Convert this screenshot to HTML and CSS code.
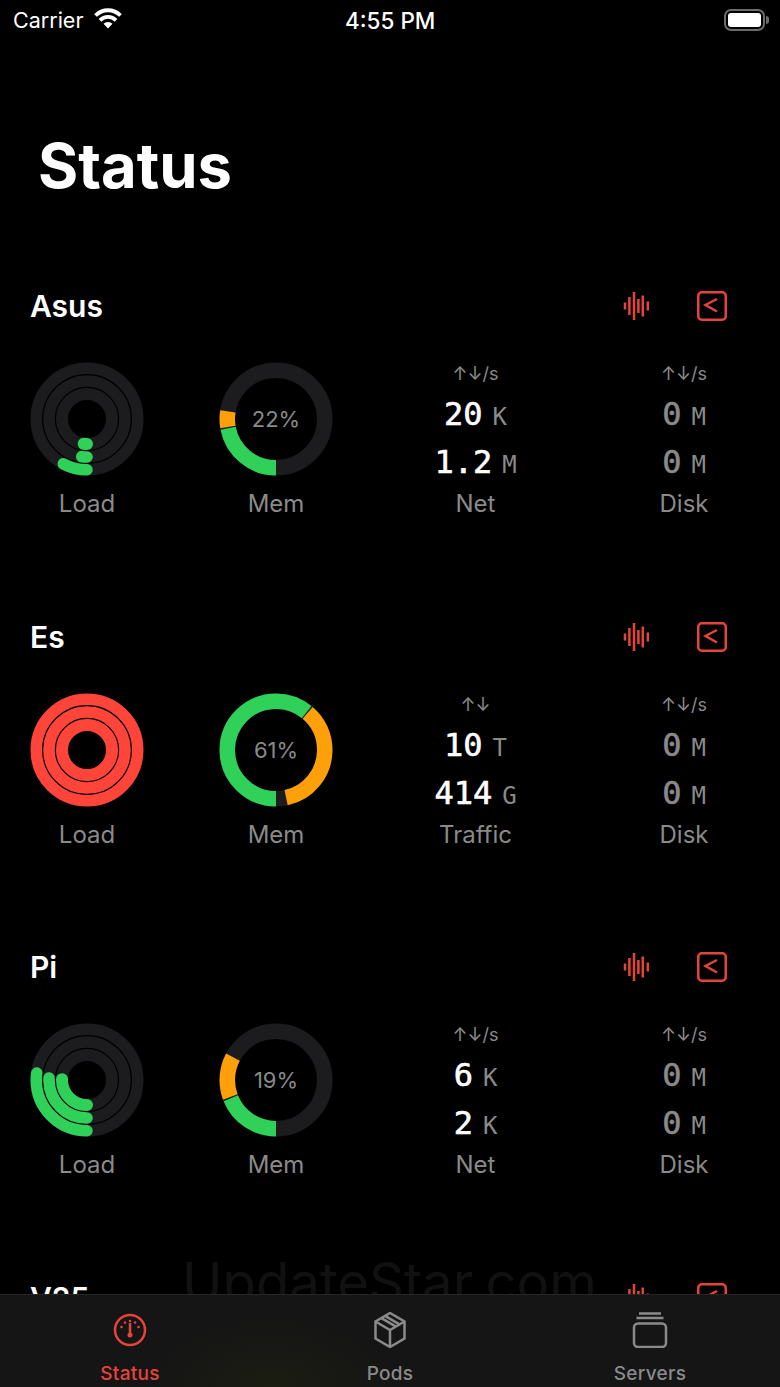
FILE: index.html
```html
<!doctype html>
<html lang="en">
<head>
    <meta charset="UTF-8">
    <meta name="viewport" content="width=device-width, initial-scale=1.0">
    <title>Status</title>
    <link rel="stylesheet" href="styles.css">
</head>
<body>
<svg class="defs" width="0" height="0">
    <symbol id="wave" viewBox="0 0 28 28">
        <path d="M2 10.500v7M6.400 5v18M11 0v28M15.400 7v14M19.800 3.500v21M24.800 9.500v9"/>
    </symbol>
    <symbol id="term" viewBox="0 0 30 30">
        <rect x="1.250" y="1.250" width="27.500" height="27.500" rx="3.500"/>
        <path d="M20 8 8.500 14 20 20.500"/>
    </symbol>
    <symbol id="load-track" viewBox="-57 -57 114 114">
        <circle class="track" r="50.750" stroke-width="11.500"/>
        <circle class="track" r="38" stroke-width="11.600"/>
        <circle class="track" r="25" stroke-width="12"/>
    </symbol>
    <symbol id="mem-track" viewBox="-57 -57 114 114">
        <circle class="track" r="48.750" stroke-width="15.500"/>
    </symbol>
</svg>

<div class="statusbar">
    <div class="carrier">
        <span>Carrier</span>
        <svg class="wifi" width="28" height="21" viewBox="0 0 28 21">
            <path d="M1.500 7.500a17.500 17.500 0 0 1 25 0M6 12.300a11.200 11.200 0 0 1 16 0"/>
            <path class="wifi-tip" d="M14 20.500 9.500 15.800a6.500 6.500 0 0 1 9 0z"/>
        </svg>
    </div>
    <div class="clock">4:55 PM</div>
    <div class="battery"><i></i></div>
</div>

<h1 class="page-title">Status</h1>

<section class="server">
    <div class="server-head">
        <h2>Asus</h2>
        <svg class="icon-wave"><use href="#wave"/></svg>
        <svg class="icon-term"><use href="#term"/></svg>
    </div>
    <div class="metrics">
        <div class="gauge">
            <svg class="ring" viewBox="-57 -57 114 114">
                <use href="#load-track" x="-57" y="-57" width="114" height="114"/>
                <g transform="rotate(90)" class="cap">
                    <circle class="green" r="50.750" stroke-width="11.500" pathLength="360" stroke-dasharray="28 332"/>
                    <circle class="green" r="38" stroke-width="11.600" pathLength="360" stroke-dasharray="8 352"/>
                    <circle class="green" r="25" stroke-width="12" pathLength="360" stroke-dasharray="8 352"/>
                </g>
            </svg>
            <div class="label">Load</div>
        </div>
        <div class="gauge">
            <div class="ring-wrap">
                <svg class="ring" viewBox="-57 -57 114 114">
                    <use href="#mem-track" x="-57" y="-57" width="114" height="114"/>
                    <g transform="rotate(90)">
                        <circle class="green" r="48.750" stroke-width="15.500" pathLength="360" stroke-dasharray="79 281"/>
                        <circle class="orange" r="48.750" stroke-width="15.500" pathLength="360" stroke-dasharray="0 80.500 18.500 261"/>
                    </g>
                </svg>
                <span class="pct">22%</span>
            </div>
            <div class="label">Mem</div>
        </div>
        <div class="stat">
            <div class="stat-head">↑↓/s</div>
            <div class="value"><b>20</b><span>K</span></div>
            <div class="value"><b>1.2</b><span>M</span></div>
            <div class="label">Net</div>
        </div>
        <div class="stat idle">
            <div class="stat-head">↑↓/s</div>
            <div class="value"><b>0</b><span>M</span></div>
            <div class="value"><b>0</b><span>M</span></div>
            <div class="label">Disk</div>
        </div>
    </div>
</section>

<section class="server">
    <div class="server-head">
        <h2>Es</h2>
        <svg class="icon-wave"><use href="#wave"/></svg>
        <svg class="icon-term"><use href="#term"/></svg>
    </div>
    <div class="metrics">
        <div class="gauge">
            <svg class="ring" viewBox="-57 -57 114 114">
                <circle class="red" r="50.750" stroke-width="11.500"/>
                <circle class="red" r="38" stroke-width="11.600"/>
                <circle class="red" r="25" stroke-width="12"/>
            </svg>
            <div class="label">Load</div>
        </div>
        <div class="gauge">
            <div class="ring-wrap">
                <svg class="ring" viewBox="-57 -57 114 114">
                    <use href="#mem-track" x="-57" y="-57" width="114" height="114"/>
                    <g transform="rotate(90)">
                        <circle class="green" r="48.750" stroke-width="15.500" pathLength="360" stroke-dasharray="219 141"/>
                        <circle class="orange" r="48.750" stroke-width="15.500" pathLength="360" stroke-dasharray="0 220.500 127.500 12"/>
                    </g>
                </svg>
                <span class="pct">61%</span>
            </div>
            <div class="label">Mem</div>
        </div>
        <div class="stat">
            <div class="stat-head">↑↓</div>
            <div class="value"><b>10</b><span>T</span></div>
            <div class="value"><b>414</b><span>G</span></div>
            <div class="label">Traffic</div>
        </div>
        <div class="stat idle">
            <div class="stat-head">↑↓/s</div>
            <div class="value"><b>0</b><span>M</span></div>
            <div class="value"><b>0</b><span>M</span></div>
            <div class="label">Disk</div>
        </div>
    </div>
</section>

<section class="server">
    <div class="server-head">
        <h2>Pi</h2>
        <svg class="icon-wave"><use href="#wave"/></svg>
        <svg class="icon-term"><use href="#term"/></svg>
    </div>
    <div class="metrics">
        <div class="gauge">
            <svg class="ring" viewBox="-57 -57 114 114">
                <use href="#load-track" x="-57" y="-57" width="114" height="114"/>
                <g transform="rotate(90)" class="cap">
                    <circle class="green" r="50.750" stroke-width="11.500" pathLength="360" stroke-dasharray="98 262"/>
                    <circle class="green" r="38" stroke-width="11.600" pathLength="360" stroke-dasharray="93 267"/>
                    <circle class="green" r="25" stroke-width="12" pathLength="360" stroke-dasharray="92 268"/>
                </g>
            </svg>
            <div class="label">Load</div>
        </div>
        <div class="gauge">
            <div class="ring-wrap">
                <svg class="ring" viewBox="-57 -57 114 114">
                    <use href="#mem-track" x="-57" y="-57" width="114" height="114"/>
                    <g transform="rotate(90)">
                        <circle class="green" r="48.750" stroke-width="15.500" pathLength="360" stroke-dasharray="68 292"/>
                        <circle class="orange" r="48.750" stroke-width="15.500" pathLength="360" stroke-dasharray="0 69.500 48.500 242"/>
                    </g>
                </svg>
                <span class="pct">19%</span>
            </div>
            <div class="label">Mem</div>
        </div>
        <div class="stat">
            <div class="stat-head">↑↓/s</div>
            <div class="value"><b>6</b><span>K</span></div>
            <div class="value"><b>2</b><span>K</span></div>
            <div class="label">Net</div>
        </div>
        <div class="stat idle">
            <div class="stat-head">↑↓/s</div>
            <div class="value"><b>0</b><span>M</span></div>
            <div class="value"><b>0</b><span>M</span></div>
            <div class="label">Disk</div>
        </div>
    </div>
</section>

<section class="server">
    <div class="server-head">
        <h2>V25</h2>
        <svg class="icon-wave"><use href="#wave"/></svg>
        <svg class="icon-term"><use href="#term"/></svg>
    </div>
</section>

<div class="watermark">UpdateStar.com</div>

<nav class="tabbar">
    <a class="tab active">
        <svg class="tab-icon" viewBox="0 0 36 36">
            <circle cx="18" cy="18" r="15"/>
            <path d="M18 11v11"/>
            <circle class="solid" cx="18" cy="23" r="2.500"/>
            <circle class="solid" cx="9.500" cy="15" r="1.300"/>
            <circle class="solid" cx="13" cy="10.500" r="1.300"/>
            <circle class="solid" cx="18" cy="9" r="1.300"/>
            <circle class="solid" cx="23" cy="10.500" r="1.300"/>
            <circle class="solid" cx="26.500" cy="15" r="1.300"/>
        </svg>
        <span>Status</span>
    </a>
    <a class="tab">
        <svg class="tab-icon" viewBox="0 0 36 36">
            <path d="M18 1 32.500 9.500v17L18 35 3.500 26.500v-17z"/>
            <path d="M3.500 9.500 18 18 32.500 9.500M18 18v17M9 5.800l14.500 8.500M13 3.800l14.500 8.500"/>
        </svg>
        <span>Pods</span>
    </a>
    <a class="tab">
        <svg class="tab-icon" viewBox="0 0 36 36">
            <rect x="2" y="11.500" width="32" height="23.500" rx="4"/>
            <path d="M7 1.500h22M4.500 6h27"/>
        </svg>
        <span>Servers</span>
    </a>
</nav>
</body>
</html>
```

FILE: styles.css
```css
* {
    box-sizing: border-box;
}
html, body {
    margin: 0;
    height: 1387px;
    overflow: hidden;
}
body {
    position: relative;
    background: #000;
    color: #fff;
    font-family: Inter, "Noto Sans", sans-serif;
}
.defs {
    position: absolute;
}
h1, h2 {
    margin: 0;
}

/* status bar */
.statusbar {
    display: flex;
    align-items: center;
    height: 40px;
    padding: 0 15px 0 13px;
}
.carrier {
    display: flex;
    align-items: center;
    gap: 11px;
    width: 332px;
    font-size: 21.500px;
}
.wifi {
    margin-top: -3px;
}
.wifi path {
    fill: none;
    stroke: #fff;
    stroke-width: 3.800;
}
.wifi .wifi-tip {
    fill: #fff;
    stroke: none;
}
.clock {
    font-size: 22.500px;
    font-weight: 500;
}
.battery {
    position: relative;
    display: flex;
    width: 41px;
    height: 22px;
    margin-left: auto;
    padding: 2px;
    border: 2px solid #6b6b6b;
    border-radius: 7px;
}
.battery i {
    flex: 1;
    background: #fff;
    border-radius: 3px;
}
.battery::after {
    content: "";
    position: absolute;
    right: -6px;
    top: 5px;
    width: 3px;
    height: 8px;
    background: #6b6b6b;
    border-radius: 0 3px 3px 0;
}

.page-title {
    margin: 96px 0 90px 38px;
    font-size: 61.500px;
    line-height: 60px;
    font-weight: 700;
}

/* server cards */
.server {
    margin-bottom: 95.500px;
}
.server-head {
    display: flex;
    align-items: center;
    height: 40px;
    margin-bottom: 36px;
    padding-left: 30px;
}
.server-head h2 {
    flex: 1;
    font-size: 30px;
    font-weight: 600;
}
.icon-wave {
    width: 28px;
    height: 28px;
    margin-right: 46px;
    fill: none;
    stroke: #e5443a;
    stroke-width: 2.500;
}
.icon-term {
    width: 30px;
    height: 30px;
    margin-right: 53px;
    fill: none;
    stroke: #e5443a;
    stroke-width: 2.500;
}
.metrics {
    display: grid;
    grid-template-columns: 114px 114px 135px 132px;
    column-gap: 75px;
    padding-left: 30px;
}
.gauge, .stat {
    text-align: center;
}
.ring-wrap {
    position: relative;
}
.ring {
    display: block;
    width: 114px;
    height: 114px;
    margin-bottom: 11px;
    overflow: visible;
}
.track {
    fill: none;
    stroke: #1c1c1e;
}
.ring circle {
    fill: none;
}
.ring .green {
    stroke: #30d158;
}
.ring .orange {
    stroke: #ff9f0a;
}
.ring .red {
    stroke: #ff453a;
}
.cap circle {
    stroke-linecap: round;
}
.pct {
    position: absolute;
    left: 0;
    right: 0;
    top: 44px;
    font-size: 22px;
    line-height: 26px;
    color: #8a8a8a;
}
.label {
    font-size: 24px;
    line-height: 34px;
    color: #8a8a8a;
}
.stat .label {
    margin-top: 1px;
}
.stat-head {
    height: 23px;
    padding-top: 1px;
    margin-bottom: 5px;
    font-size: 18px;
    line-height: 22px;
    color: #8a8a8a;
}
.value {
    display: flex;
    justify-content: center;
    align-items: baseline;
    gap: 10px;
    height: 48px;
    line-height: 48px;
    font-family: "DejaVu Sans Mono", "Liberation Mono", monospace;
}
.value b {
    font-size: 32px;
    font-weight: 400;
    -webkit-text-stroke: 0.6px currentColor;
}
.value span {
    font-size: 24px;
    color: #8a8a8a;
}
.idle .value b {
    color: #8a8a8a;
}

.watermark {
    position: absolute;
    left: 182px;
    top: 1251px;
    font-size: 54.500px;
    line-height: 62px;
    color: #111;
    pointer-events: none;
}

/* tab bar */
.tabbar {
    position: absolute;
    left: 0;
    right: 0;
    bottom: 0;
    display: grid;
    grid-template-columns: 260px 260px 260px;
    height: 93px;
    background: radial-gradient(ellipse 120px 70px at 270px 100%, #1b1d12, #151515);
    border-top: 1px solid #262626;
}
.tab {
    display: flex;
    flex-direction: column;
    align-items: center;
    padding-top: 17px;
    font-size: 19px;
    letter-spacing: 0.3px;
    font-weight: 500;
    color: #8a8a8a;
}
.tab-icon {
    width: 36px;
    height: 36px;
    margin-bottom: 14px;
    fill: none;
    stroke: currentColor;
    stroke-width: 2.500;
}
.tab-icon .solid {
    fill: currentColor;
    stroke: none;
}
.tab.active {
    color: #e5443a;
}
```
